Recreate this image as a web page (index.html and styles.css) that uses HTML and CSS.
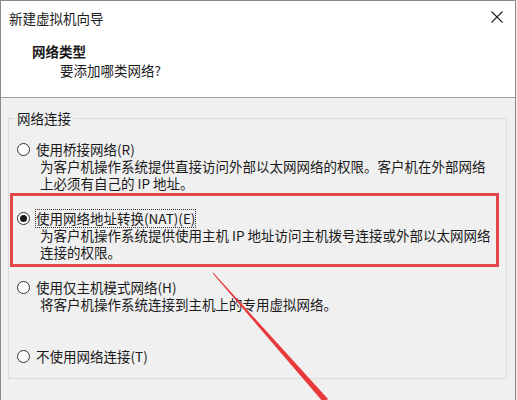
FILE: index.html
```html
<!doctype html>
<html>
  <head>
    <meta charset="utf-8">
    <title>新建虚拟机向导</title>
    <link rel="stylesheet" href="styles.css">
  </head>
  <body>
    <div class="window">
      <div class="titlebar">
        <span class="title">新建虚拟机向导</span>
        <svg class="close" width="12" height="12" viewBox="0 0 12 12">
          <path d="M0.5 0.5 L11.5 11.5 M11.5 0.5 L0.5 11.5" stroke="#222" stroke-width="1.1" fill="none"/>
        </svg>
      </div>
      <div class="header">
        <div class="header-title">网络类型</div>
        <div class="header-sub">要添加哪类网络?</div>
      </div>
      <div class="content">
        <fieldset class="group">
          <legend>网络连接</legend>
          <div class="option">
            <div class="option-row"><span class="radio"></span><span>使用桥接网络(R)</span></div>
            <div class="option-desc">为客户机操作系统提供直接访问外部以太网网络的权限。客户机在外部网络<br>上必须有自己的 IP 地址。</div>
          </div>
          <div class="option">
            <div class="option-row"><span class="radio checked"></span><span class="focused">使用网络地址转换(NAT)(E)</span></div>
            <div class="option-desc">为客户机操作系统提供使用主机 IP 地址访问主机拨号连接或外部以太网网络<br>连接的权限。</div>
          </div>
          <div class="option">
            <div class="option-row"><span class="radio"></span><span>使用仅主机模式网络(H)</span></div>
            <div class="option-desc">将客户机操作系统连接到主机上的专用虚拟网络。</div>
          </div>
          <div class="option last">
            <div class="option-row"><span class="radio"></span><span>不使用网络连接(T)</span></div>
          </div>
        </fieldset>
      </div>
    </div>
    <!-- annotation drawn over the screenshot -->
    <svg class="marks" width="517" height="400" viewBox="0 0 517 400">
      <rect x="11.5" y="194.5" width="486" height="71" fill="none" stroke="#e2454a" stroke-width="3"/>
      <polygon points="212.6,273.3 213.4,272.7 328,399 323.5,402.5" fill="#e8383a"/>
    </svg>
  </body>
</html>
```

FILE: styles.css
```css
body {
  background: #f0f0f0;
  color: #1a1a1a;
  font: 13.5px/17px "Noto Sans CJK SC", sans-serif;
  height: 400px;
  margin: 0;
  overflow: hidden;
  position: relative;
  width: 517px;
}
.window {
  background: #f0f0f0;
  border: 1px solid #8a8a8a;
  border-bottom: none;
  box-sizing: border-box;
  height: 400px;
  width: 516px;
}
.titlebar {
  align-items: center;
  background: white;
  display: flex;
  height: 34px;
  justify-content: space-between;
  padding: 0 12px 0 8px;
}
  .titlebar .close {
    margin-top: -2px;
  }
.header {
  background: white;
  border-bottom: 1px solid #a0a0a0;
  box-sizing: border-box;
  height: 63px;
  padding: 7px 0 0 31px;
}
.header-title {
  font-weight: bold;
  line-height: 19px;
}
.header-sub {
  line-height: 18px;
  padding-left: 28px;
}
.group {
  border: 1px solid #dcdcdc;
  margin: 12px 8px 0 7px;
  min-width: 0;
  padding: 0 8px 13px 8px;
}
  .group legend {
    margin-left: -2px;
    padding: 0 2px;
  }
.option {
  margin-bottom: 18px;
  min-height: 51px;
}
  .option:first-of-type {
    margin-top: 14px;
  }
  .option.last {
    margin-bottom: 0;
    min-height: 0;
  }
.option-row {
  align-items: center;
  display: flex;
  gap: 6px;
}
.option-desc {
  padding-left: 23px;
}
.radio {
  background: white;
  border: 1px solid #333;
  border-radius: 50%;
  box-sizing: border-box;
  height: 13px;
  position: relative;
  width: 13px;
}
  .radio.checked::after {
    background: #1a1a1a;
    border-radius: 50%;
    content: "";
    height: 7px;
    left: 2px;
    position: absolute;
    top: 2px;
    width: 7px;
  }
.focused {
  outline: 1px dotted #333;
  outline-offset: 0;
}
.marks {
  left: 0;
  pointer-events: none;
  position: absolute;
  top: 0;
}
```
